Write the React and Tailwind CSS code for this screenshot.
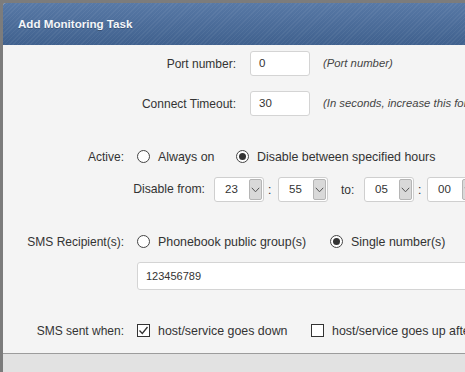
import React from "react";

function Radio({ checked }) {
  return (
    <span className="w-[13px] h-[13px] rounded-full border border-[#444] bg-white flex items-center justify-center shrink-0">
      {checked && <span className="w-[7px] h-[7px] rounded-full bg-[#333]" />}
    </span>
  );
}

function Check({ checked }) {
  return (
    <span className="w-[13px] h-[13px] border border-[#333] bg-white flex items-center justify-center shrink-0">
      {checked && (
        <svg width="11" height="11" viewBox="0 0 11 11">
          <path d="M1.5 5.5 L4.3 8.5 L9.5 2" fill="none" stroke="#333" strokeWidth="1.3" />
        </svg>
      )}
    </span>
  );
}

function Select({ value }) {
  return (
    <div className="w-[50px] h-[25px] border border-[#cfcfcf] rounded-[3px] bg-white flex shrink-0">
      <span className="flex-1 flex items-center pl-[10px] text-[11.5px] text-[#333]">{value}</span>
      <span className="w-[13px] my-[1px] mr-[1px] bg-[#d9d9d9] border border-[#b5b5b5] rounded-[2px] flex items-center justify-center">
        <svg width="9" height="6" viewBox="0 0 9 6">
          <path d="M0.8 0.8 L4.5 4.8 L8.2 0.8" fill="none" stroke="#555" strokeWidth="1" />
        </svg>
      </span>
    </div>
  );
}

export default function App() {
  return (
    <div className="w-[465px] h-[372px] overflow-hidden bg-[#7c7c7c] pt-[3px] pl-[3px] font-['Liberation_Sans',Arial,sans-serif] text-[12px] text-[#333]">
      <div className="w-[640px] h-[369px] flex flex-col bg-[#f4f4f4] rounded-tl-[3px] overflow-hidden">
        <div className="h-[42px] shrink-0 flex items-center pl-[15px] text-[11.6px] font-bold text-[#f4f6f9] [text-shadow:0_1px_0_rgba(0,0,0,0.25)] [background-image:repeating-linear-gradient(135deg,rgba(255,255,255,0.05)_0px,rgba(255,255,255,0.05)_1px,transparent_1px,transparent_3px),linear-gradient(to_bottom,#5879a6,#40618e)]">
          Add Monitoring Task
        </div>

        <div className="h-[308px] shrink-0 flex flex-col">
          <div className="flex flex-col gap-[15px] pt-[6px]">
            <div className="flex items-center">
              <span className="w-[233px] text-right">Port number:</span>
              <span className="ml-[14px] w-[60px] h-[25px] border border-[#d4d4d4] rounded-[3px] bg-white flex items-center pl-[8px] text-[11.5px]">0</span>
              <span className="ml-[13px] italic text-[11.3px] text-[#444]">(Port number)</span>
            </div>
            <div className="flex items-center">
              <span className="w-[233px] text-right">Connect Timeout:</span>
              <span className="ml-[14px] w-[60px] h-[25px] border border-[#d4d4d4] rounded-[3px] bg-white flex items-center pl-[8px] text-[11.5px]">30</span>
              <span className="ml-[13px] italic text-[11.3px] text-[#444] whitespace-nowrap">(In seconds, increase this for slow hosts)</span>
            </div>
          </div>

          <div className="mt-[31px] h-[20px] flex items-center">
            <span className="w-[121px] text-right">Active:</span>
            <span className="ml-[13px] w-[99px] flex items-center gap-[8px]">
              <Radio />
              <span className="text-[12.4px]">Always on</span>
            </span>
            <span className="flex items-center gap-[8px]">
              <Radio checked />
              <span className="text-[12.4px]">Disable between specified hours</span>
            </span>
          </div>

          <div className="mt-[10px] h-[25px] flex items-center pl-[126px]">
            <span className="w-[76px] text-right text-[12.2px]">Disable from:</span>
            <span className="ml-[9px]"><Select value="23" /></span>
            <span className="w-[14px] pl-[4px]">:</span>
            <Select value="55" />
            <span className="ml-[13px] w-[23px]">to:</span>
            <Select value="05" />
            <span className="w-[13px] pl-[4px]">:</span>
            <Select value="00" />
          </div>

          <div className="mt-[30px] h-[20px] flex items-center">
            <span className="w-[121px] text-right">SMS Recipient(s):</span>
            <span className="ml-[13px] w-[193px] flex items-center gap-[8px]">
              <Radio />
              <span className="text-[12.4px]">Phonebook public group(s)</span>
            </span>
            <span className="flex items-center gap-[8px]">
              <Radio checked />
              <span className="text-[12.4px]">Single number(s)</span>
            </span>
          </div>

          <div className="mt-[10px] ml-[134px] h-[28px] border border-[#d4d4d4] rounded-[3px] bg-white flex items-center pl-[8px] text-[11px]">
            123456789
          </div>

          <div className="mt-[31px] h-[20px] flex items-center">
            <span className="w-[121px] text-right">SMS sent when:</span>
            <span className="ml-[13px] w-[174px] flex items-center gap-[8px]">
              <Check checked />
              <span className="text-[12.4px]">host/service goes down</span>
            </span>
            <span className="flex items-center gap-[8px] whitespace-nowrap">
              <Check />
              <span className="text-[12.4px]">host/service goes up after being down</span>
            </span>
          </div>
        </div>

        <div className="flex-1 border-t border-[#9c9c9c] bg-[#e2e2e2]" />
      </div>
    </div>
  );
}
